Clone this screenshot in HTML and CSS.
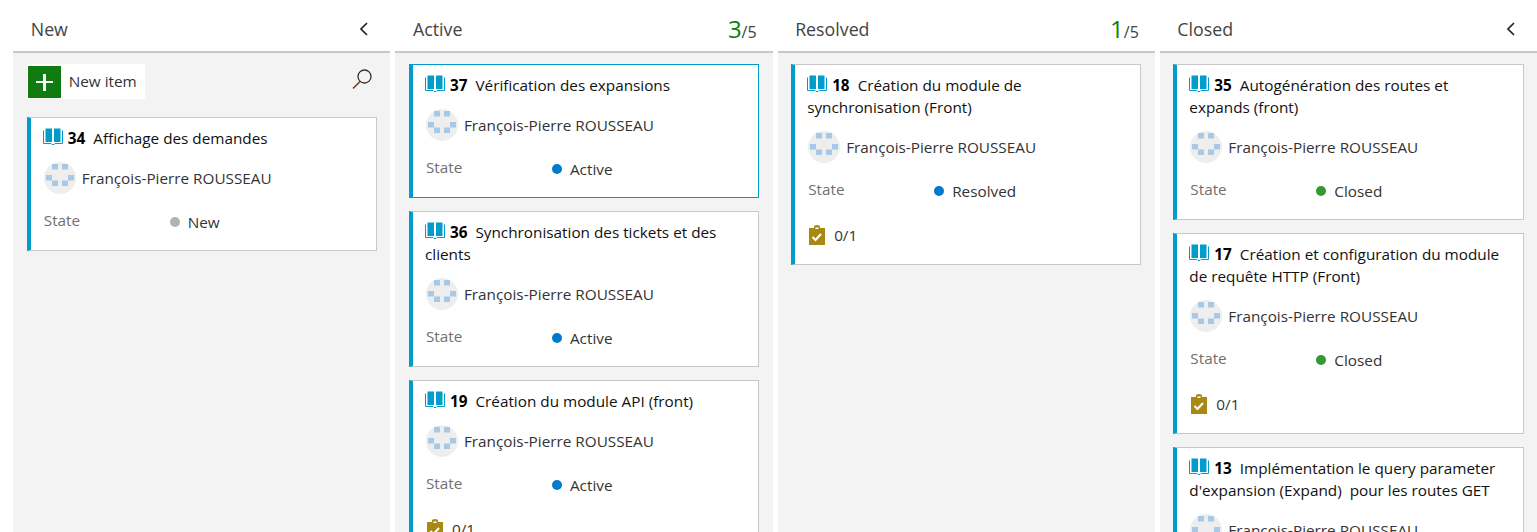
FILE: index.html
```html
<!DOCTYPE html>
<html>
<head>
	<title>Board</title>
	<link rel="stylesheet" href="styles.css">
</head>
<body>
	<svg class="defs" width="0" height="0">
		<symbol id="book" viewBox="0 0 20 17">
			<path fill="#009ccc" d="M2.5 0.5h6.5v13.5h-6.5zM11 0.5h6.5v13.5h-6.5z"/>
			<path fill="none" stroke="#009ccc" d="M0.5 2.5v13h7.5l1 1h2l1-1h7.5v-13"/>
		</symbol>
		<symbol id="avatar" viewBox="0 0 32 32">
			<circle cx="16" cy="16" r="16" fill="#eeeeee"/>
			<path fill="#a9c8e6" d="M8 2h6v5.500h-6zM18 2h6v5.500h-6zM2 13h6v5.500h-6zM24 13h6v5.500h-6zM8 18.500h6v5.500h-6zM18 18.500h6v5.500h-6z"/>
		</symbol>
		<symbol id="tasks" viewBox="0 0 16 20">
			<path fill="#a88a12" d="M0 3h5v-1.500a3 1.500 0 0 1 6 0v1.500h5v17h-16z"/>
			<path fill="#ffffff" d="M6.500 2.500h3v1.500h-3z"/>
			<path fill="none" stroke="#ffffff" stroke-width="2" d="M3.500 12l3 3 5.500-6"/>
		</symbol>
		<symbol id="chevron" viewBox="0 0 10 14">
			<path fill="none" stroke="#222222" stroke-width="1.700" d="M8 1l-6 6 6 6"/>
		</symbol>
	</svg>

	<div class="board">
		<section class="column">
			<header class="column-head">
				<h2>New</h2>
				<svg class="chevron"><use href="#chevron"/></svg>
			</header>
			<div class="column-body">
				<div class="toolbar">
					<button class="new-item"><span class="plus"></span><span class="new-label">New item</span></button>
					<svg class="search" viewBox="0 0 20 21"><circle cx="12.500" cy="7.500" r="6.500" fill="none" stroke="#333333" stroke-width="1.300"/><path stroke="#7a3b1a" stroke-width="1.600" d="M8 12.500l-7 7"/></svg>
				</div>
				<div class="card">
					<div class="title"><svg class="book"><use href="#book"/></svg><b>34</b>Affichage des demandes</div>
					<div class="person"><svg class="avatar"><use href="#avatar"/></svg>François-Pierre ROUSSEAU</div>
					<div class="field"><span class="label">State</span><span class="value"><i class="dot new"></i>New</span></div>
				</div>
			</div>
		</section>

		<section class="column">
			<header class="column-head">
				<h2>Active</h2>
				<div class="count"><em>3</em>/5</div>
			</header>
			<div class="column-body">
				<div class="card selected">
					<div class="title"><svg class="book"><use href="#book"/></svg><b>37</b>Vérification des expansions</div>
					<div class="person"><svg class="avatar"><use href="#avatar"/></svg>François-Pierre ROUSSEAU</div>
					<div class="field"><span class="label">State</span><span class="value"><i class="dot active"></i>Active</span></div>
				</div>
				<div class="card">
					<div class="title"><svg class="book"><use href="#book"/></svg><b>36</b>Synchronisation des tickets et des clients</div>
					<div class="person"><svg class="avatar"><use href="#avatar"/></svg>François-Pierre ROUSSEAU</div>
					<div class="field"><span class="label">State</span><span class="value"><i class="dot active"></i>Active</span></div>
				</div>
				<div class="card">
					<div class="title"><svg class="book"><use href="#book"/></svg><b>19</b>Création du module API (front)</div>
					<div class="person"><svg class="avatar"><use href="#avatar"/></svg>François-Pierre ROUSSEAU</div>
					<div class="field"><span class="label">State</span><span class="value"><i class="dot active"></i>Active</span></div>
					<div class="tasks"><svg class="task-icon"><use href="#tasks"/></svg>0/1</div>
				</div>
			</div>
		</section>

		<section class="column">
			<header class="column-head">
				<h2>Resolved</h2>
				<div class="count"><em>1</em>/5</div>
			</header>
			<div class="column-body">
				<div class="card">
					<div class="title"><svg class="book"><use href="#book"/></svg><b>18</b>Création du module de synchronisation (Front)</div>
					<div class="person"><svg class="avatar"><use href="#avatar"/></svg>François-Pierre ROUSSEAU</div>
					<div class="field"><span class="label">State</span><span class="value"><i class="dot active"></i>Resolved</span></div>
					<div class="tasks"><svg class="task-icon"><use href="#tasks"/></svg>0/1</div>
				</div>
			</div>
		</section>

		<section class="column">
			<header class="column-head">
				<h2>Closed</h2>
				<svg class="chevron"><use href="#chevron"/></svg>
			</header>
			<div class="column-body">
				<div class="card">
					<div class="title"><svg class="book"><use href="#book"/></svg><b>35</b>Autogénération des routes et expands (front)</div>
					<div class="person"><svg class="avatar"><use href="#avatar"/></svg>François-Pierre ROUSSEAU</div>
					<div class="field"><span class="label">State</span><span class="value"><i class="dot closed"></i>Closed</span></div>
				</div>
				<div class="card">
					<div class="title"><svg class="book"><use href="#book"/></svg><b>17</b>Création et configuration du module de requête HTTP (Front)</div>
					<div class="person"><svg class="avatar"><use href="#avatar"/></svg>François-Pierre ROUSSEAU</div>
					<div class="field"><span class="label">State</span><span class="value"><i class="dot closed"></i>Closed</span></div>
					<div class="tasks"><svg class="task-icon"><use href="#tasks"/></svg>0/1</div>
				</div>
				<div class="card">
					<div class="title"><svg class="book"><use href="#book"/></svg><b>13</b>Implémentation le query parameter d'expansion (Expand)&nbsp; pour les routes GET</div>
					<div class="person"><svg class="avatar"><use href="#avatar"/></svg>François-Pierre ROUSSEAU</div>
				</div>
			</div>
		</section>
	</div>
</body>
</html>
```

FILE: styles.css
```css
html, body {
	height: 100%;
}

body {
	margin: 0;
	overflow: hidden;
	background-color: #ffffff;
	color: #222222;
	font-family: "Open Sans", "Noto Sans", sans-serif;
	font-size: 15.3px;
}

.defs {
	position: absolute;
}

.board {
	display: grid;
	grid-template-columns: repeat(4, 1fr);
	gap: 5px;
	height: 100%;
	padding-left: 13.25px;
}

.column {
	display: flex;
	flex-direction: column;
	min-width: 0;
	overflow: hidden;
}

.column-head {
	display: flex;
	align-items: center;
	justify-content: space-between;
	flex: none;
	height: 53px;
	padding: 6px 16px 0 17.5px;
	box-sizing: border-box;
	border-bottom: 2px solid #c8c8c8;
}

.column-head h2 {
	margin: 0;
	font-size: 17.8px;
	font-weight: 400;
	color: #444444;
}

.chevron {
	width: 10px;
	height: 14px;
	margin-right: 5px;
}

.count {
	font-size: 16px;
	color: #444444;
}

.count em {
	font-size: 24px;
	font-style: normal;
	color: #107c10;
}

.column-body {
	flex: 1;
	display: flex;
	flex-direction: column;
	gap: 13px;
	padding: 11px 13.5px;
	background-color: #f3f3f3;
}

.toolbar {
	display: flex;
	align-items: center;
	justify-content: space-between;
	margin-bottom: 5px;
}

.new-item {
	display: flex;
	align-items: center;
	width: 118px;
	height: 35px;
	padding: 0 0 0 1px;
	border: none;
	background-color: #ffffff;
	color: #333333;
	font-family: inherit;
	font-size: 15.3px;
}

.new-label {
	margin-bottom: 2px;
}

.plus {
	position: relative;
	width: 33px;
	height: 32px;
	margin-right: 8px;
	background-color: #107c10;
}

.plus::before, .plus::after {
	content: "";
	position: absolute;
	background-color: #ffffff;
}

.plus::before {
	left: 8px;
	top: 15px;
	width: 17px;
	height: 2px;
}

.plus::after {
	left: 15px;
	top: 8px;
	width: 3px;
	height: 17px;
}

.search {
	width: 20px;
	height: 21px;
	margin: 0 5px 5px 0;
}

.card {
	flex: none;
	padding: 9px 13px 17px 12px;
	background-color: #ffffff;
	border: 1px solid #c8c8c8;
	border-left: 4px solid #009ccc;
}

.card.selected {
	border-color: #009ccc;
}

.title {
	line-height: 22px;
	color: #111111;
}

.title b {
	margin-right: 8px;
	color: #000000;
}

.book {
	width: 20px;
	height: 17px;
	margin-right: 5px;
	vertical-align: -1px;
}

.person {
	display: flex;
	align-items: center;
	margin: 13px 0 0 1px;
	line-height: 22px;
	color: #333333;
}

.avatar {
	width: 32px;
	height: 32px;
	margin-right: 6px;
}

.field {
	display: grid;
	grid-template-columns: 126px 1fr;
	margin: 17px 0 0 1px;
	line-height: 22px;
}

.label {
	margin-top: -2px;
	color: #707070;
}

.value {
	display: flex;
	align-items: center;
	color: #333333;
}

.dot {
	width: 10px;
	height: 10px;
	margin-right: 8px;
	border-radius: 50%;
}

.dot.new {
	background-color: #b2b2b2;
}

.dot.active {
	background-color: #007acc;
}

.dot.closed {
	background-color: #339933;
}

.tasks {
	display: flex;
	align-items: center;
	margin: 21.5px 0 1px 2px;
	line-height: 22px;
	color: #333333;
}

.task-icon {
	width: 16px;
	height: 20px;
	margin-right: 9px;
}
```
